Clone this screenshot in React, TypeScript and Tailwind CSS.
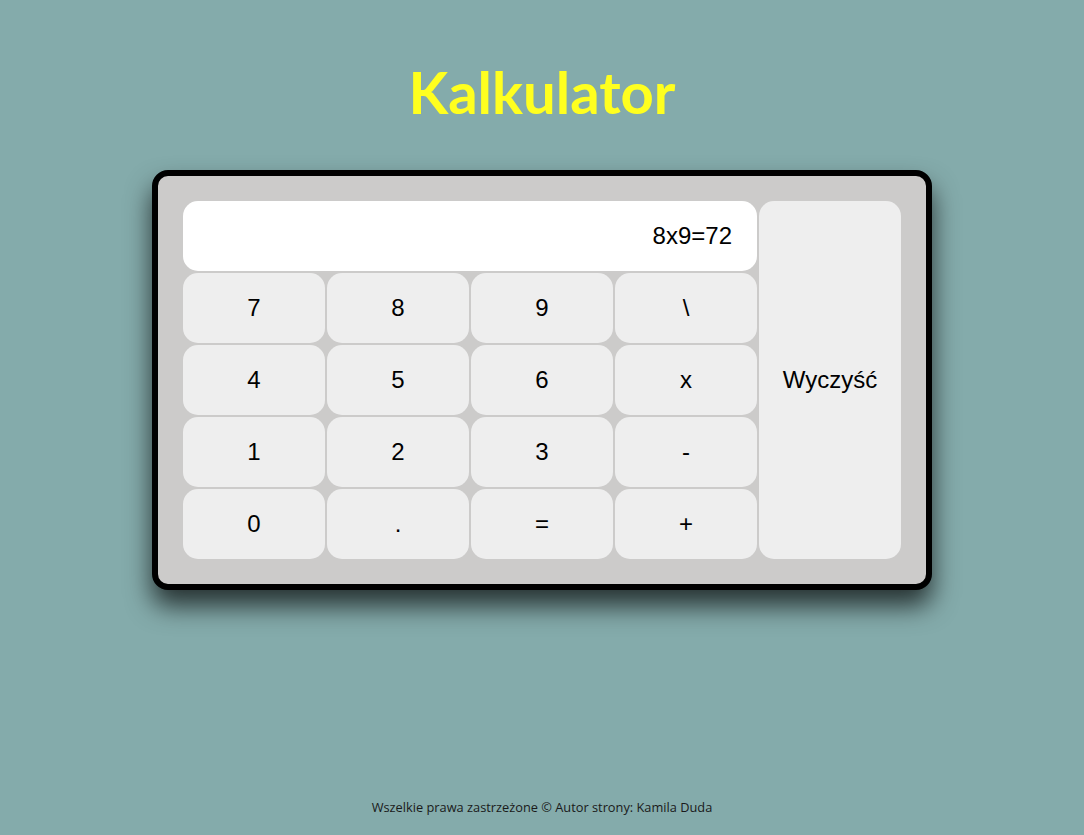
import React from 'react';

const keys: string[] = ['7', '8', '9', '\\', '4', '5', '6', 'x', '1', '2', '3', '-', '0', '.', '=', '+'];

const App: React.FC = () => {
    return (
        <div className="min-h-screen w-full bg-[#84abab] flex flex-col items-center">
            <h1 className="mt-[58px] text-[58px] leading-[68px] font-bold text-[#ffff1f] font-['Lato',sans-serif]">
                Kalkulator
            </h1>

            <div className="mt-[44px] border-[6px] border-black rounded-[16px] bg-[#cccbca] p-[25px] shadow-[0_16px_26px_rgba(0,0,0,0.7)]">
                <div className="grid grid-cols-[repeat(5,142px)] grid-rows-[repeat(5,70px)] gap-[2px] font-['Liberation_Sans',Arial,sans-serif] text-[24px] text-black">
                    <div className="col-span-4 bg-white rounded-[15px] flex items-center justify-end pr-[25px]">
                        8x9=72
                    </div>
                    <button className="row-span-5 col-start-5 row-start-1 bg-[#eeeeee] rounded-[15px] flex items-center justify-center">
                        Wyczyść
                    </button>
                    {keys.map((k) => (
                        <button
                            key={k}
                            className="bg-[#eeeeee] rounded-[15px] flex items-center justify-center"
                        >
                            {k}
                        </button>
                    ))}
                </div>
            </div>

            <footer className="mt-auto mb-[18px] text-[12.8px] text-[#1a1a1a] font-['Open_Sans',sans-serif]">
                Wszelkie prawa zastrzeżone © Autor strony: Kamila Duda
            </footer>
        </div>
    );
};

export default App;
